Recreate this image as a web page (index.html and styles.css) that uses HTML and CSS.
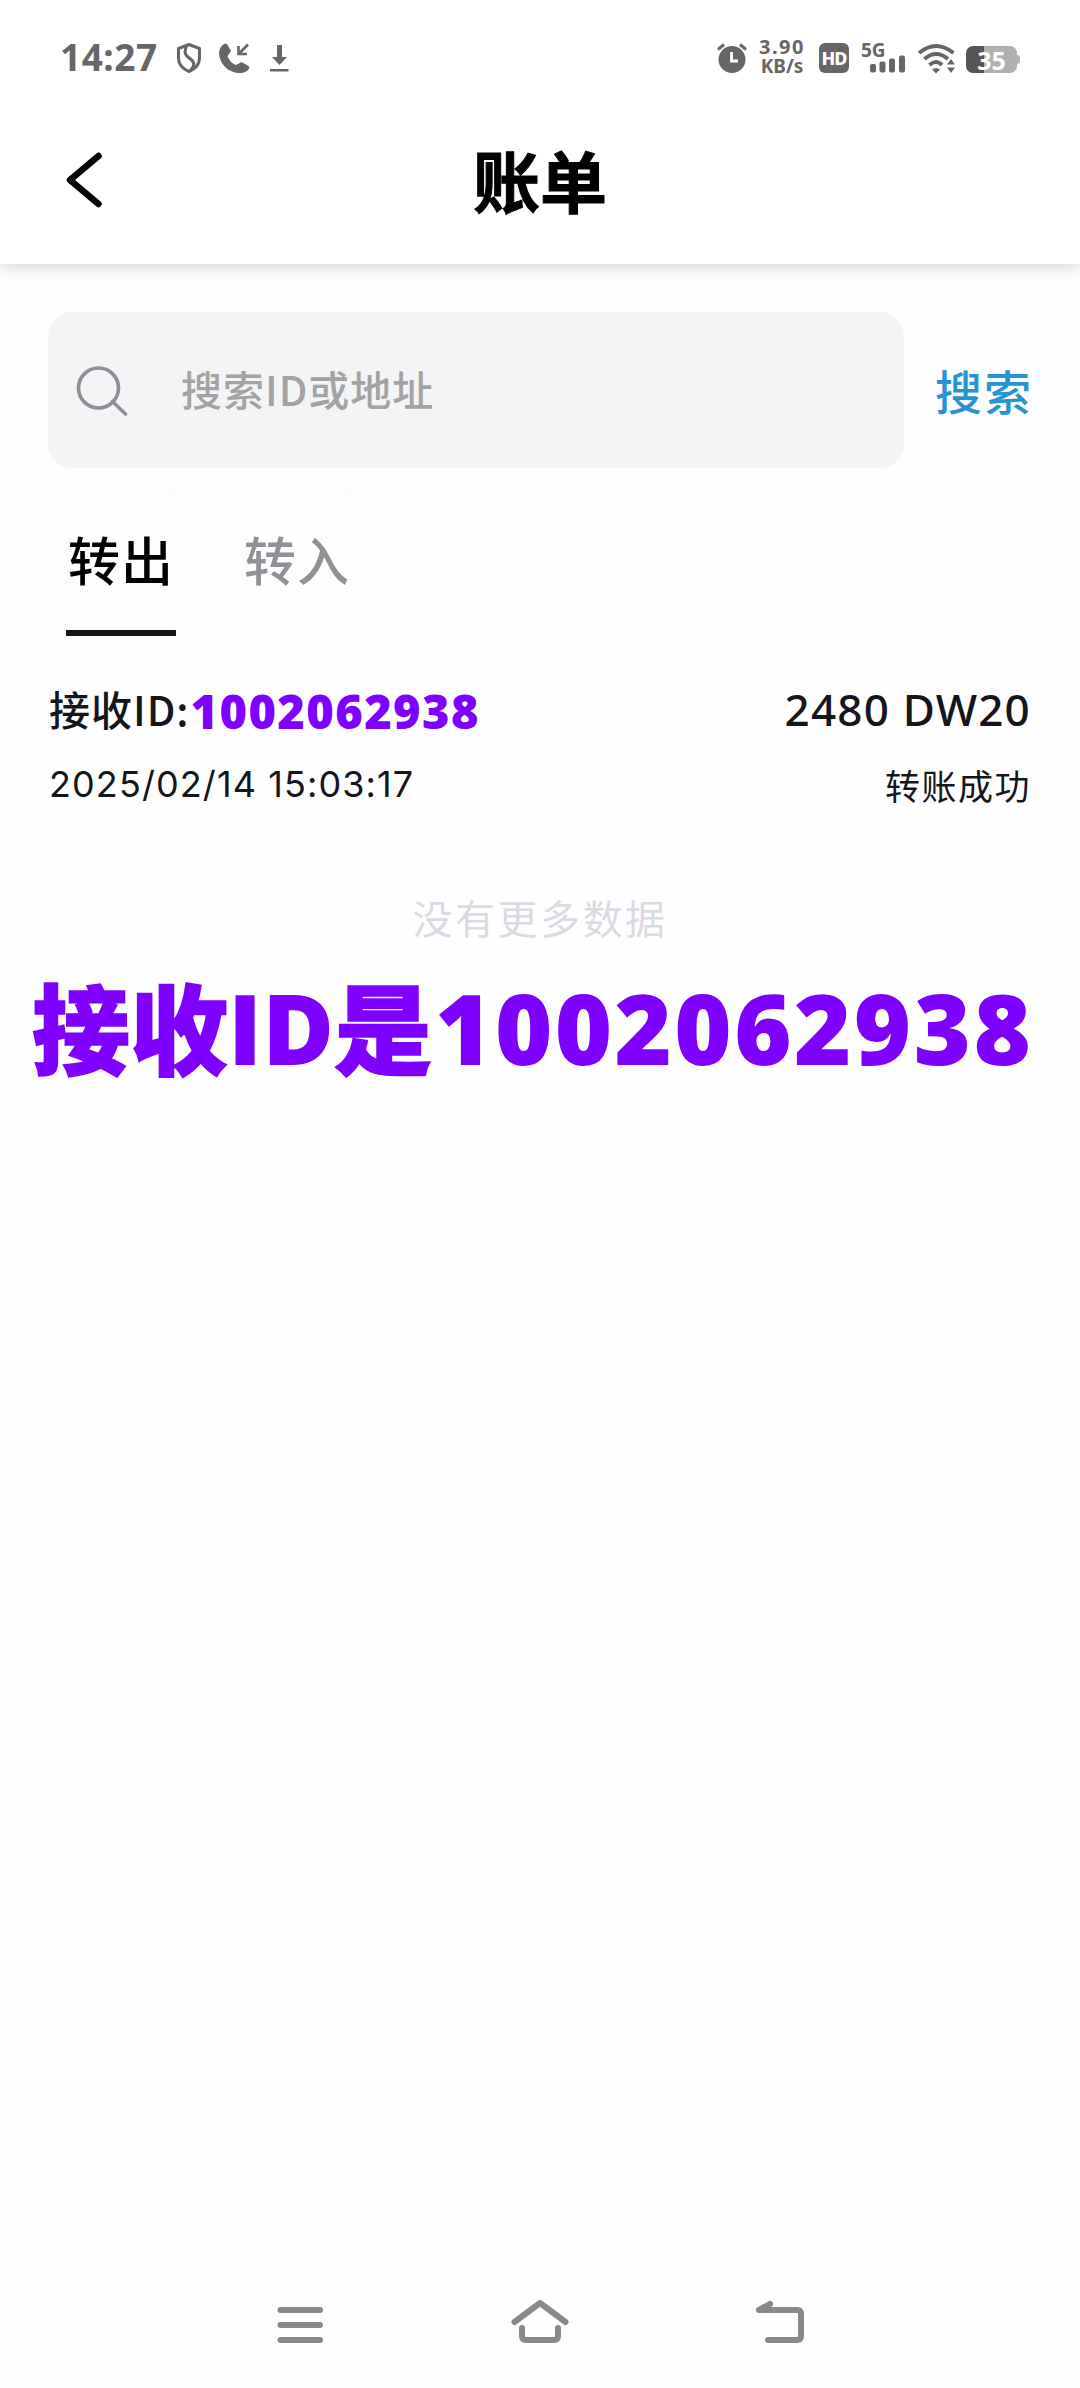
FILE: index.html
```html
<!DOCTYPE html>
<html lang="zh-CN">
<head>
    <meta charset="UTF-8">
    <meta name="viewport" content="width=device-width, initial-scale=1.0">
    <title>账单</title>
    <link rel="stylesheet" href="styles.css">
</head>
<body>
    <div class="page">
        <div class="status">
            <span class="time">14:27</span>
            <svg class="status-left" width="114" height="34" viewBox="176 42 114 34">
                <g fill="none" stroke="#666" stroke-width="3" stroke-linejoin="round">
                    <path d="M189 45.500 L199.500 49.500 V59 C199.500 66 195 70 189 72.500 C183 70 178.500 66 178.500 59 V49.500 Z"/>
                    <path d="M186.500 47 C183 56 187 57 191 60.500 C195.500 64 194 68 190.500 71"/>
                </g>
                <path fill="#666" d="M225 44.500 C221 46.500 219 50 219 55 C220 66 229 74 240 74 C244 74 248 72 249.500 69 L248.500 67 L241.500 63 L236 66 C231 64 229 61 227.500 57 L231 52 L227 45 Z"/>
                <path fill="none" stroke="#666" stroke-width="2.600" d="M248 45.500 L239 54.500 M238.500 47 V55 H247"/>
                <path fill="#666" d="M277 46 h5 v12 h5 l-7.500 8 l-7.500 -8 h5 z M270 70 h18.500 v2.400 h-18.500 z"/>
            </svg>
            <div class="status-right">
                <svg width="30" height="32" viewBox="717 43 30 32">
                    <circle cx="732" cy="60.500" r="13.500" fill="#666"/>
                    <path d="M718 50.500 L724 45.500 M746 50.500 L740 45.500" stroke="#666" stroke-width="3" fill="none"/>
                    <path d="M731.500 53 V62 H738" stroke="#fff" stroke-width="2.800" fill="none"/>
                </svg>
                <div class="speed"><span>3.90</span><span class="unit">KB/s</span></div>
                <span class="hd">HD</span>
                <div class="signal">
                    <span>5G</span>
                    <svg width="35" height="18" viewBox="0 0 35 18" fill="#666">
                        <rect x="0" y="9" width="6" height="8.500" rx="2"/>
                        <rect x="9.500" y="6.500" width="6" height="11" rx="2"/>
                        <rect x="19" y="3.500" width="6" height="14" rx="2"/>
                        <rect x="29" y="0.500" width="6" height="17" rx="2"/>
                    </svg>
                </div>
                <svg class="wifi" width="38" height="32" viewBox="917 43 38 32">
                    <g fill="none" stroke="#666" stroke-width="4">
                        <path d="M919 54 Q936 40 953.500 54"/>
                        <path d="M924.500 60 Q936 50 948 60"/>
                        <path d="M929.500 66 Q936 60 942 66"/>
                    </g>
                    <path fill="#666" d="M932 70.500 Q936 67.500 940 70.500 L936 74.500 Z M951 60 l4 5.500 h-8 z M951 74 l4 -5.500 h-8 z"/>
                </svg>
                <div class="battery"><span>35</span></div>
            </div>
        </div>

        <div class="header">
            <svg class="back" width="40" height="60" viewBox="64 150 40 60">
                <path d="M98.500 156 L70 180 L98.500 204" fill="none" stroke="#000" stroke-width="6.500" stroke-linecap="round" stroke-linejoin="round"/>
            </svg>
            <h1>账单</h1>
        </div>

        <div class="search">
            <div class="search-box">
                <svg width="54" height="54" viewBox="74 362 54 54" fill="none" stroke="#8d8f94" stroke-width="3.600">
                    <circle cx="98.500" cy="387" r="20"/>
                    <path d="M112.500 400.500 L125.500 413" stroke-linecap="round"/>
                </svg>
                <span>搜索ID或地址</span>
            </div>
            <a class="search-btn">搜索</a>
        </div>

        <div class="tabs">
            <div class="tab active">转出</div>
            <div class="tab">转入</div>
        </div>

        <div class="record">
            <div class="line main">
                <div class="receiver"><span>接收ID:</span><b>1002062938</b></div>
                <span class="amount">2480 DW20</span>
            </div>
            <div class="line sub">
                <span class="date">2025/02/14 15:03:17</span>
                <span class="state">转账成功</span>
            </div>
        </div>

        <div class="empty">没有更多数据</div>
        <div class="note"><span class="cn">接收</span><span class="en">ID</span><span class="cn">是</span><span class="num">1002062938</span></div>

        <div class="nav">
            <svg width="540" height="60" viewBox="270 2294 540 60" fill="none" stroke="#898989" stroke-width="6" stroke-linecap="round" stroke-linejoin="round">
                <path d="M280.500 2310 H320 M280.500 2325 H320 M280.500 2340 H320"/>
                <path d="M514.500 2322 L540 2303 L565.500 2322"/>
                <path d="M522 2328 V2336 Q522 2340 526 2340 H554 Q558 2340 558 2336 V2328"/>
                <path d="M770 2304 L759 2310 H797 Q801 2310 801 2314 V2336 Q801 2340 797 2340 H768"/>
            </svg>
        </div>
    </div>
</body>
</html>
```
FILE: styles.css
```css
body{
    margin: 0;
    background: #fefefe;
    font-family: "Noto Sans CJK SC", sans-serif;
    color: #15161b;
}
.page{
    width: 1080px;
    height: 2388px;
    display: flex;
    flex-direction: column;
    overflow: hidden;
}

/* 状态栏 */
.status{
    position: relative;
    z-index: 1;
    height: 96px;
    box-sizing: border-box;
    padding: 20px 60px 0 60px;
    display: flex;
    align-items: center;
    background: #fff;
    color: #666;
}
.time{
    width: 116px;
    margin-top: -2px;
    font: 700 37px/38px "Noto Sans", sans-serif;
    letter-spacing: 0.5px;
}
.status-right{
    margin-left: auto;
    display: flex;
    align-items: center;
}
.speed{
    width: 52px;
    margin: -4px 11px 0 9px;
    text-align: center;
    display: flex;
    flex-direction: column;
    gap: 1px;
    font: 700 20px/18px "Noto Sans", sans-serif;
    letter-spacing: 1.5px;
}
.unit{
    font-size: 19px;
    font-weight: 700;
    letter-spacing: 0;
}
.hd{
    width: 30px;
    height: 30px;
    border-radius: 6px;
    background: #666;
    color: #fff;
    font: 800 18px/30px "Noto Sans", sans-serif;
    letter-spacing: -1px;
    text-align: center;
}
.signal{
    width: 44px;
    margin-left: 12px;
    display: flex;
    flex-direction: column;
    font: 700 19px/14px "Noto Sans", sans-serif;
}
.signal svg{
    margin: -2px 0 0 9px;
}
.wifi{
    margin-left: 12px;
}
.battery{
    position: relative;
    width: 51px;
    height: 27px;
    margin: 2px 3px 0 11px;
    border-radius: 7px;
    background: linear-gradient(90deg, #555 35%, #b0b0b0 35%);
    color: #fff;
    font: 700 25px/28px "Noto Sans", sans-serif;
    text-align: center;
}
.battery::after{
    content: "";
    position: absolute;
    right: -3px;
    top: 9px;
    width: 3px;
    height: 9px;
    border-radius: 0 3px 3px 0;
    background: #b0b0b0;
}

/* 标题 */
.header{
    height: 168px;
    padding: 0 64px;
    display: grid;
    grid-template-columns: 40px 1fr 40px;
    align-items: center;
    background: #fff;
    box-shadow: 0 2px 16px rgba(0, 0, 0, 0.18);
}
h1{
    margin: -3px 0 0;
    font-size: 67px;
    line-height: 100px;
    font-weight: 700;
    text-align: center;
    color: #000;
    -webkit-text-stroke: 1px #000;
}

.search{
    display: flex;
    align-items: center;
    margin-top: 48px;
    padding-left: 48px;
}
.search-box{
    width: 856px;
    height: 156px;
    box-sizing: border-box;
    padding: 0 26px;
    display: flex;
    align-items: center;
    border-radius: 24px;
    background: #f3f4f6;
    color: #a3a3a3;
    font-size: 41px;
    font-weight: 500;
    letter-spacing: 1px;
}
.search-box span{
    margin: -4px 0 0 53px;
}
.search-btn{
    margin: -2px 0 0 31px;
    font-size: 47px;
    font-weight: 500;
    letter-spacing: 2px;
    color: #2694d3;
}

.tabs{
    display: flex;
    gap: 66px;
    margin: 20px 66px 0;
}
.tab{
    width: 110px;
    height: 148px;
    box-sizing: border-box;
    border: 6px solid #fcfcfc;
    border-bottom: 0;
    display: flex;
    justify-content: center;
    font-size: 52px;
    font-weight: 500;
    line-height: 130px;
    letter-spacing: 1px;
    white-space: nowrap;
    color: #909197;
}
.tab.active{
    position: relative;
    color: #000;
}
.tab.active::after{
    content: "";
    position: absolute;
    left: -6px;
    right: -6px;
    bottom: 0;
    height: 6px;
    background: #15161b;
}

.record{
    padding: 0 49px;
    margin-top: 42px;
}
.line{
    display: flex;
    justify-content: space-between;
    align-items: center;
}
.main{
    height: 62px;
    font-size: 41px;
    font-weight: 500;
    letter-spacing: 1px;
}
.receiver{
    display: flex;
    align-items: center;
}
.receiver span{
    margin-top: -2px;
}
.receiver b{
    margin: 4px 0 0 1px;
    font: 800 47px/62px "Open Sans", sans-serif;
    letter-spacing: 1.4px;
    color: #8000ff;
}
.amount{
    font: 500 44px/62px "Noto Sans", sans-serif;
    letter-spacing: 1.2px;
}
.sub{
    height: 84px;
    margin-top: 2px;
    font-size: 35px;
    letter-spacing: 1.5px;
}
.date{
    font: 400 36px/60px Inter, sans-serif;
    letter-spacing: 1.1px;
}
.empty{
    margin-top: 61px;
    text-align: center;
    font-size: 40px;
    line-height: 60px;
    letter-spacing: 2.5px;
    color: #d9dbe3;
}
.note{
    display: flex;
    align-items: center;
    margin: 8px 0 0 32px;
    height: 140px;
    color: #8000ff;
    white-space: nowrap;
}
.cn{
    font-size: 98px;
    font-weight: 900;
    margin-top: -2px;
    -webkit-text-stroke: 1.5px #8000ff;
}
.en, .num{
    margin-top: 3px;
    font: 800 98px/140px "Open Sans", sans-serif;
}
.num{
    margin-left: 3px;
    letter-spacing: 2.4px;
}

/* 底部导航 */
.nav{
    margin: auto auto 34px;
    height: 60px;
}
```
